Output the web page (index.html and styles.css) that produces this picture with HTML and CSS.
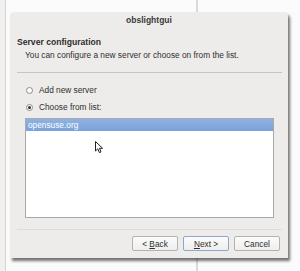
FILE: index.html
```html
<!DOCTYPE html>
<html>
<head>
    <title>obslightgui</title>
    <link rel="stylesheet" href="styles.css">
</head>
<body>
    <div class="dialog">
        <div class="titlebar">obslightgui</div>

        <div class="header">
            <div class="header-title">Server configuration</div>
            <div class="header-sub">You can configure a new server or choose on from the list.</div>
        </div>
        <div class="separator"></div>

        <div class="options">
            <label class="radio-row"><span class="radio"></span>Add new server</label>
            <label class="radio-row"><span class="radio checked"></span>Choose from list:</label>
        </div>

        <div class="list">
            <div class="list-item selected">opensuse.org</div>
        </div>

        <div class="separator faint"></div>

        <div class="buttons">
            <button class="btn">&lt; <u>B</u>ack</button>
            <button class="btn default"><u>N</u>ext &gt;</button>
            <button class="btn">Cancel</button>
        </div>

        <svg class="cursor" width="9" height="13" viewBox="0 0 9 13">
            <path d="M0.5 0.5 L0.5 10 L2.8 7.8 L4.4 11.6 L6 10.9 L4.5 7.3 L7.6 7.3 Z" fill="#fff" stroke="#222" stroke-width="1"/>
        </svg>
    </div>
</body>
</html>
```

FILE: styles.css
```css
body {
    margin: 0;
    width: 300px;
    height: 271px;
    padding: 12px 0 0 10px;
    box-sizing: border-box;
    font-family: "Liberation Sans", Arial, sans-serif;
    font-size: 8.3px;
    color: #2e2e2e;
    background:
        linear-gradient(to right, #f1f0ef 0, #f1f0ef 5px, #d4d4d4 5px, #d4d4d4 6px, transparent 6px),
        linear-gradient(to right, transparent 196px, #dadada 196px, #dadada 198px, transparent 198px),
        #fbfbfb;
    overflow: hidden;
}
.dialog {
    position: relative;
    width: 278px;
    height: 246px;
    background-color: #edeceb;
    border-radius: 4px 4px 0 0;
    box-shadow: 2px 3px 3px rgba(0, 0, 0, 0.55);
    display: flex;
    flex-direction: column;
}
.titlebar {
    height: 16px;
    line-height: 16px;
    text-align: center;
    font-weight: bold;
    font-size: 8.5px;
    color: #3a3a3a;
}
.header {
    padding: 9px 0 0 7px;
    height: 35px;
    box-sizing: border-box;
}
.header-title {
    font-weight: bold;
    font-size: 8.6px;
    line-height: 11px;
}
.header-sub {
    padding-left: 8px;
    margin-top: 1px;
    line-height: 12px;
}
.separator {
    height: 1px;
    margin: 9px 6px 0 7px;
    background-color: #c6c5c4;
}
.separator.faint {
    margin-top: 11px;
    background-color: #dedddc;
}
.options {
    padding: 11px 0 0 16px;
    display: flex;
    flex-direction: column;
    gap: 5px;
}
.radio-row {
    display: flex;
    align-items: center;
    height: 12px;
    gap: 6px;
}
.radio {
    width: 7px;
    height: 7px;
    border: 1px solid #8a8a8a;
    border-radius: 50%;
    background-color: #fdfdfd;
    box-sizing: border-box;
    position: relative;
}
.radio.checked::after {
    content: "";
    position: absolute;
    left: 1px;
    top: 1px;
    width: 3px;
    height: 3px;
    border-radius: 50%;
    background-color: #2e2e2e;
}
.list {
    margin: 5px 0 0 15px;
    width: 249px;
    height: 100px;
    box-sizing: border-box;
    border: 1px solid #a9a8a7;
    background-color: #fff;
}
.list-item {
    height: 12px;
    line-height: 12px;
    padding-left: 2px;
}
.list-item.selected {
    background: linear-gradient(#8fb2e3, #7aa2da);
    color: #fff;
}
.buttons {
    display: flex;
    justify-content: flex-end;
    gap: 5px;
    padding: 6px 8px 0 0;
}
.btn {
    font-family: "Liberation Sans", Arial, sans-serif;
    font-size: 8.3px;
    color: #2e2e2e;
    height: 15px;
    padding: 0;
    width: 46px;
    border: 1px solid #b3b2b1;
    border-radius: 2px;
    background: linear-gradient(#fbfbfb, #eeeeed);
}
.btn.default {
    border-color: #8ea8cc;
}
.cursor {
    position: absolute;
    left: 85px;
    top: 129px;
}
```
